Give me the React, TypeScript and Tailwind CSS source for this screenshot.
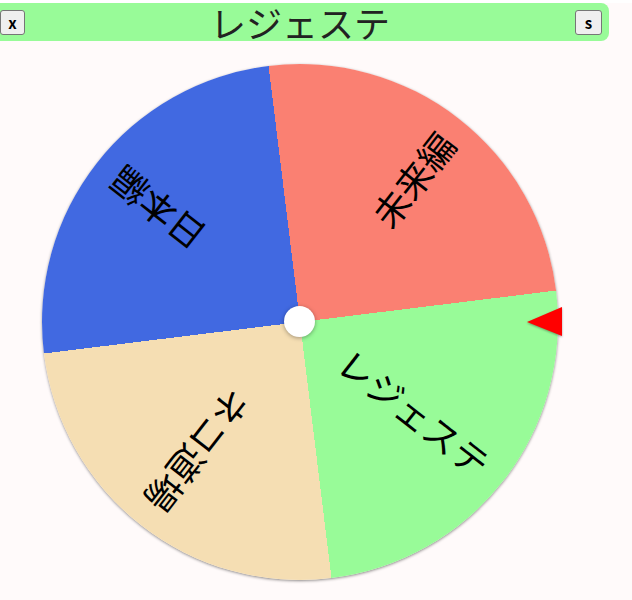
import React from "react";

interface Segment {
  label: string;
  rot: string;
}

// wheel is turned -7deg as a whole; each label sits at its segment's mid angle
const segments: Segment[] = [
  { label: "未来編", rot: "rotate-[-45deg]" },
  { label: "レジェステ", rot: "rotate-[45deg]" },
  { label: "ネコ道場", rot: "rotate-[135deg]" },
  { label: "日本編", rot: "rotate-[225deg]" },
];

function Header() {
  return (
    <div className="mt-[3px] flex h-[38px] w-[609px] items-center justify-between rounded-r-[8px] bg-[#98fb98]">
      <button
        type="button"
        className="flex h-[25px] w-[25px] items-center justify-center rounded-[3px] border border-[#767676] bg-[#efefef] text-[15px] font-bold leading-none text-black"
      >
        x
      </button>
      <h1 className="text-[36px] leading-[38px] font-normal text-[#222]">レジェステ</h1>
      <button
        type="button"
        className="mr-[7px] flex h-[25px] w-[27px] items-center justify-center rounded-[3px] border border-[#767676] bg-[#efefef] text-[15px] font-bold leading-none text-black"
      >
        s
      </button>
    </div>
  );
}

function Wheel() {
  return (
    <div className="relative mt-[23px] ml-[42px] h-[516px] w-[516px]">
      <div className="relative h-full w-full rotate-[-7deg] rounded-full bg-[conic-gradient(#fa8072_0deg_90deg,#98fb98_90deg_180deg,#f5deb3_180deg_270deg,#4169e1_270deg_360deg)] shadow-[0_1px_3px_rgba(0,0,0,0.45)]">
        {segments.map((s) => (
          <div
            key={s.label}
            className={`absolute top-1/2 left-1/2 mt-[-24px] flex h-[48px] w-[258px] origin-left items-center justify-end pr-[22px] text-[36px] leading-none text-black ${s.rot}`}
          >
            {s.label}
          </div>
        ))}
      </div>

      {/* hub */}
      <div className="absolute top-1/2 left-1/2 mt-[-16px] ml-[-16px] h-[31px] w-[31px] rounded-full bg-white shadow-[0_1px_4px_rgba(0,0,0,0.35)]" />

      {/* pointer */}
      <svg
        className="absolute top-[243px] left-[485px] drop-shadow-[0_1px_1px_rgba(0,0,0,0.35)]"
        width="36"
        height="30"
        viewBox="0 0 36 30"
      >
        <polygon points="0,15 35,0 35,29" fill="#ff0000" />
      </svg>
    </div>
  );
}

export default function App() {
  return (
    <div className="min-h-[600px] w-[632px] bg-[#fffafa] font-['Noto_Sans_CJK_JP','Noto_Sans',sans-serif]">
      <Header />
      <Wheel />
    </div>
  );
}
